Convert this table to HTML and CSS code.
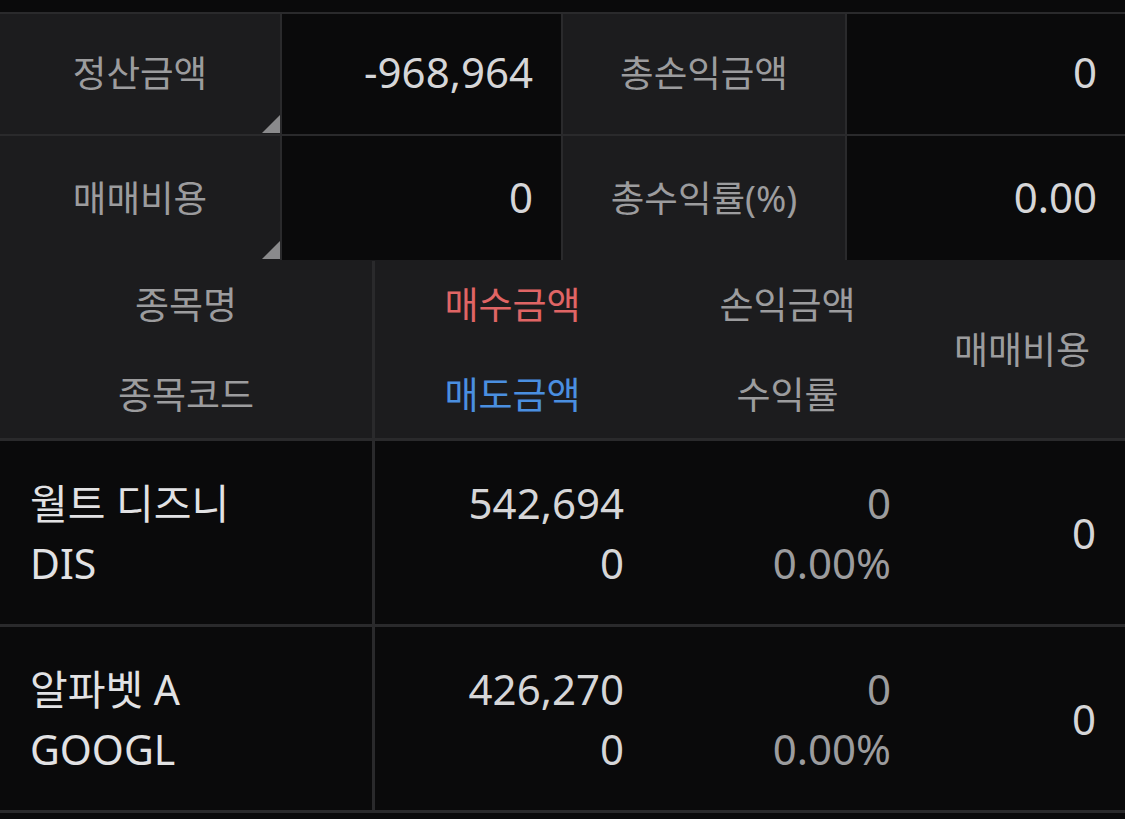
FILE: index.html
```html
<!DOCTYPE html>
<html lang="ko">
<head>
<meta charset="utf-8">
<link rel="stylesheet" href="styles.css">
</head>
<body>
<div class="page">
  <div class="summary">
    <div class="s-label corner">정산금액</div>
    <div class="s-value">-968,964</div>
    <div class="s-label">총손익금액</div>
    <div class="s-value">0</div>
    <div class="s-label corner">매매비용</div>
    <div class="s-value">0</div>
    <div class="s-label">총수익률(%)</div>
    <div class="s-value">0.00</div>
  </div>

  <div class="thead">
    <div class="th th-name">
      <span>종목명</span>
      <span>종목코드</span>
    </div>
    <div class="th">
      <span class="buy">매수금액</span>
      <span class="sell">매도금액</span>
    </div>
    <div class="th">
      <span>손익금액</span>
      <span>수익률</span>
    </div>
    <div class="th th-single">
      <span>매매비용</span>
    </div>
  </div>

  <div class="trow">
    <div class="td td-name">
      <span>월트 디즈니</span>
      <span>DIS</span>
    </div>
    <div class="td td-amt">
      <span>542,694</span>
      <span>0</span>
    </div>
    <div class="td td-pl">
      <span>0</span>
      <span>0.00%</span>
    </div>
    <div class="td td-fee">
      <span>0</span>
    </div>
  </div>

  <div class="trow">
    <div class="td td-name">
      <span>알파벳 A</span>
      <span>GOOGL</span>
    </div>
    <div class="td td-amt">
      <span>426,270</span>
      <span>0</span>
    </div>
    <div class="td td-pl">
      <span>0</span>
      <span>0.00%</span>
    </div>
    <div class="td td-fee">
      <span>0</span>
    </div>
  </div>
</div>
</body>
</html>
```

FILE: styles.css
```css
html, body {
  margin: 0;
  padding: 0;
  background: #0a0a0b;
  font-family: "Noto Sans", "Noto Sans CJK KR", sans-serif;
}

.page {
  width: 1125px;
  height: 819px;
  overflow: hidden;
  padding-top: 12px;
  box-sizing: border-box;
}

.summary {
  display: grid;
  grid-template-columns: 280px 279px 282px 278px;
  grid-template-rows: 120px 124px;
  column-gap: 2px;
  row-gap: 2px;
  padding-top: 2px;
  background: #2a2a2c;
}

.s-label {
  position: relative;
  background: #1c1c1e;
  color: #9c9c9e;
  font-size: 36.5px;
  display: flex;
  align-items: center;
  justify-content: center;
  padding-bottom: 6px;
}

.summary > :nth-child(n+5) {
  padding-bottom: 3px;
}

.corner::after {
  content: "";
  position: absolute;
  right: 0;
  bottom: 1px;
  width: 0;
  height: 0;
  border-left: 18px solid transparent;
  border-bottom: 18px solid #8a8a8c;
}

.s-value {
  background: #0a0a0b;
  color: #d6d6d8;
  font-size: 42px;
  display: flex;
  align-items: center;
  justify-content: flex-end;
  padding-right: 28px;
  padding-bottom: 6px;
}

.thead {
  display: grid;
  grid-template-columns: 375px 275px 275px 200px;
  height: 177px;
  background: #1c1c1e;
  border-top: 1px solid #1c1c1e;
  border-bottom: 3px solid #2a2a2c;
}

.th {
  display: flex;
  flex-direction: column;
  align-items: center;
  color: #9c9c9e;
  font-size: 37px;
}

.th span {
  height: 88px;
  line-height: 88px;
}

.th-name {
  border-right: 3px solid #2a2a2c;
}

.th-name span:last-child,
.th:not(.th-single) span:last-child {
  line-height: 92px;
}

.th-single {
  justify-content: center;
  padding-right: 6px;
}

.th .buy { color: #e06565; }
.th .sell { color: #4a8fe0; }

.trow {
  display: grid;
  grid-template-columns: 375px 275px 275px 200px;
  height: 183px;
  border-bottom: 3px solid #2a2a2c;
}

.td {
  display: flex;
  flex-direction: column;
  justify-content: center;
}

.td span {
  line-height: 60px;
  height: 60px;
}

.td-name {
  border-right: 3px solid #2a2a2c;
  padding-left: 30px;
  color: #e2e2e4;
  font-size: 41px;
}

.td-amt {
  align-items: flex-end;
  padding-right: 26px;
  color: #d6d6d8;
  font-size: 42px;
}

.td-pl {
  align-items: flex-end;
  padding-right: 34px;
  color: #9c9c9e;
  font-size: 42px;
}

.td-fee {
  align-items: flex-end;
  padding-right: 29px;
  color: #d6d6d8;
  font-size: 42px;
}
```
